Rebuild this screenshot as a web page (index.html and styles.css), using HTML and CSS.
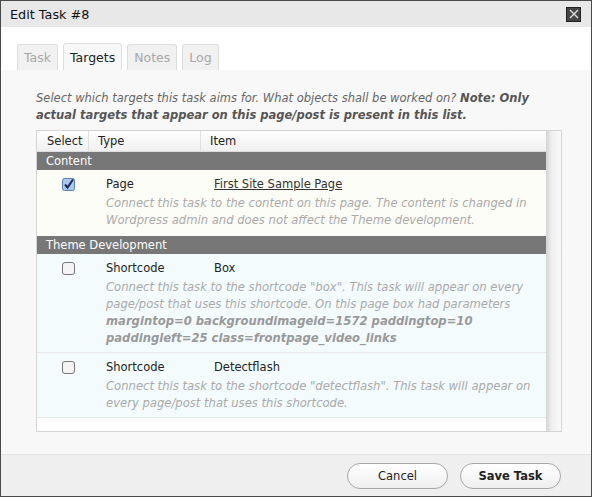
FILE: index.html
```html
<!DOCTYPE html>
<html>
<head>
<meta charset="utf-8">
<link rel="stylesheet" href="styles.css">
</head>
<body>
<div class="dialog">
  <div class="titlebar">
    <span class="title">Edit Task #8</span>
    <span class="close"><svg width="10" height="10" viewBox="0 0 10 10"><path d="M1 1L9 9M9 1L1 9" stroke="#ddd" stroke-width="1.4"/></svg></span>
  </div>
  <div class="tabs">
    <span class="tab">Task</span>
    <span class="tab active">Targets</span>
    <span class="tab">Notes</span>
    <span class="tab">Log</span>
  </div>
  <div class="panel">
    <p class="intro">Select which targets this task aims for. What objects shall be worked on? <b>Note: Only actual targets that appear on this page/post is present in this list.</b></p>
    <div class="tablebox">
      <div class="table">
        <div class="thead">
          <div class="c1">Select</div>
          <div class="c2">Type</div>
          <div class="c3">Item</div>
        </div>
        <div class="group">Content</div>
        <div class="row yellow">
          <div class="line">
            <span class="cb checked"><svg width="13" height="13" viewBox="0 0 13 13"><rect x="0.5" y="0.5" width="12" height="12" rx="2" fill="#a9c8ee" stroke="#5a7fb0"/><path d="M3 6.5L5.5 9.5L11 1.5" fill="none" stroke="#1a2a50" stroke-width="2"/></svg></span>
            <span class="type">Page</span>
            <a class="item link">First Site Sample Page</a>
          </div>
          <div class="desc">Connect this task to the content on this page. The content is changed in Wordpress admin and does not affect the Theme development.</div>
        </div>
        <div class="group">Theme Development</div>
        <div class="row blue">
          <div class="line">
            <span class="cb"><svg width="13" height="13" viewBox="0 0 13 13"><rect x="0.5" y="0.5" width="12" height="12" rx="2.5" fill="#f4f4f4" stroke="#777"/></svg></span>
            <span class="type">Shortcode</span>
            <span class="item">Box</span>
          </div>
          <div class="desc">Connect this task to the shortcode "box". This task will appear on every page/post that uses this shortcode. On this page box had parameters <b>margintop=0 backgroundimageid=1572 paddingtop=10 paddingleft=25 class=frontpage_video_links</b></div>
        </div>
        <div class="row blue">
          <div class="line">
            <span class="cb"><svg width="13" height="13" viewBox="0 0 13 13"><rect x="0.5" y="0.5" width="12" height="12" rx="2.5" fill="#f4f4f4" stroke="#777"/></svg></span>
            <span class="type">Shortcode</span>
            <span class="item">Detectflash</span>
          </div>
          <div class="desc">Connect this task to the shortcode "detectflash". This task will appear on every page/post that uses this shortcode.</div>
        </div>
      </div>
      <div class="scroll"></div>
    </div>
  </div>
  <div class="footer">
    <button class="btn">Cancel</button>
    <button class="btn bold">Save Task</button>
  </div>
</div>
</body>
</html>
```
FILE: styles.css
```css
* { box-sizing: border-box; }
html, body { margin: 0; padding: 0; }
body { font-family: "DejaVu Sans", sans-serif; font-size: 11.5px; color: #222; }
.dialog { width: 592px; height: 497px; border: 1px solid #4a4a4a; display: flex; flex-direction: column; background: #fff; }
.titlebar { height: 26px; background: #e8e8e8; display: flex; align-items: center; justify-content: space-between; padding: 0 10px 0 9px; }
.title { font-size: 12.8px; color: #111; }
.close { width: 15px; height: 15px; background: #444; border: 1px solid #222; display: flex; align-items: center; justify-content: center; }
.tabs { display: flex; gap: 5px; padding: 17px 0 0 16px; height: 43px; align-items: flex-end; }
.tab { height: 26px; padding: 0 6px; border: 1px solid #ddd; border-bottom: none; border-radius: 3px 3px 0 0; background: #f1f1f1; color: #a8a8a8; font-size: 12.5px; display: flex; align-items: center; }
.tab.active { background: #f8f8f8; color: #222; height: 27px; }
.panel { flex: 1; background: #f8f8f8; padding: 20px 29px 0 35px; }
.intro { margin: 0 0 6px 0; font-style: italic; color: #666; line-height: 17px; }
.intro b { color: #555; }
.tablebox { display: flex; border: 1px solid #d4d4d4; height: 302px; background: #fff; }
.table { flex: 1; }
.scroll { width: 15px; background: linear-gradient(to right, #d4d4d4, #f0f0f0 40%, #fafafa); }
.thead { display: flex; height: 21px; background: linear-gradient(#fff, #f0f0f0); border-bottom: 1px solid #ddd; align-items: stretch; }
.thead > div { display: flex; align-items: center; }
.c1 { width: 52px; padding-left: 10px; border-right: 1px solid #e0e0e0; }
.c2 { width: 112px; padding-left: 9px; border-right: 1px solid #e0e0e0; }
.c3 { padding-left: 9px; }
.group { height: 18px; background: #777; color: #fff; padding-left: 9px; display: flex; align-items: center; }
.row { padding: 6px 10px 5px 25px; border-bottom: 1px solid #e8e8e8; }
.row.yellow { background: #fdfdf7; border-bottom: none; padding-bottom: 7px; }
.row.blue { background: #f3fbfd; }
.line { display: flex; align-items: center; height: 16px; }
.cb { width: 13px; height: 13px; margin-right: 31px; display: flex; }
.type { width: 108px; }
.link { text-decoration: underline; color: #333; }
.desc { margin-left: 44px; margin-top: 3px; font-size: 11.6px; font-style: italic; color: #aaa; line-height: 17px; }
.desc b { color: #999; }
.footer { height: 42px; background: #efefef; border-top: 1px solid #e4e4e4; display: flex; justify-content: flex-end; align-items: center; gap: 12px; padding-right: 30px; }
.btn { width: 101px; height: 26px; border-radius: 13px; border: 1px solid #a8a8a8; background: linear-gradient(#fff, #efefef); font-family: "DejaVu Sans", sans-serif; font-size: 11.5px; color: #222; }
.btn.bold { font-weight: bold; }
```
